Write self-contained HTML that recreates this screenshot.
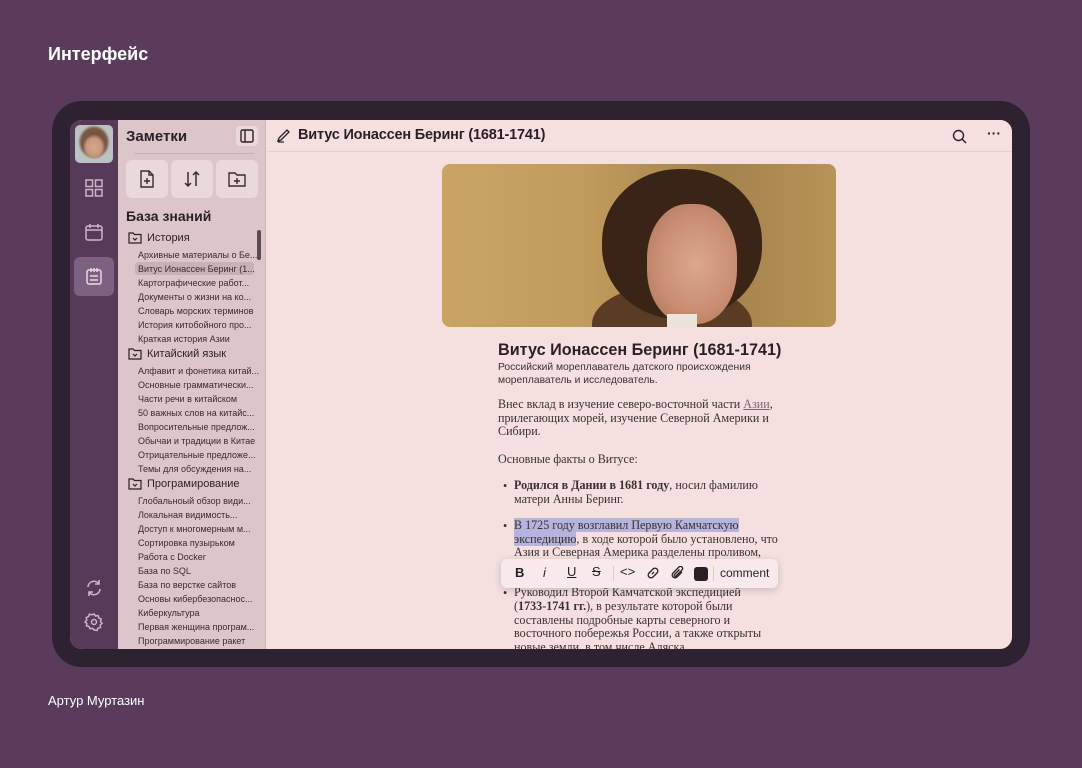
<!DOCTYPE html>
<html><head><meta charset="utf-8"><style>
*{margin:0;padding:0;box-sizing:border-box}
body{width:1082px;height:768px;background:#5a3b5c;font-family:"Liberation Sans",sans-serif;position:relative;overflow:hidden}
.abs{position:absolute}
.frame{left:52px;top:101px;width:978px;height:566px;background:#2d2230;border-radius:30px}
.screen{left:70px;top:120px;width:942px;height:529px;border-radius:12px;overflow:hidden;background:#f5e0df}
.rail{left:0;top:0;width:48px;height:529px;background:#573a58}
.notes{left:48px;top:0;width:148px;height:529px;background:#dcc6c9;border-right:1px solid #cdb3b7}
.item{position:absolute;left:20px;font-size:9px;color:#3a2a33;white-space:nowrap}
.folder{position:absolute;left:10px;font-size:11px;color:#2a1f26;display:flex;align-items:center;gap:5px}
.serif{font-family:"Liberation Serif",serif;font-size:12.1px;color:#3a2f33;position:absolute;left:428px;white-space:nowrap}
.btn{position:absolute;top:40px;width:42px;height:38px;background:#ead9da;border-radius:6px;display:flex;align-items:center;justify-content:center}
</style></head><body>
<div class="abs" style="left:48px;top:44px;color:#fff;font-size:18px;font-weight:bold">Интерфейс</div>
<div class="abs" style="left:48px;top:693px;color:#fff;font-size:13px">Артур Муртазин</div>
<div class="abs frame"></div>
<div class="abs screen">
 <div class="abs rail">
  <div class="abs" style="left:5px;top:5px;width:38px;height:38px;border-radius:5px;background:radial-gradient(ellipse 30% 34% at 50% 58%,#d9a88f 0,#c8957c 70%,transparent 100%),radial-gradient(ellipse 42% 45% at 50% 45%,#6a4a35 0,#7a5a45 80%,transparent 100%),#b9c3c4"></div>
  <svg class="abs" style="left:14px;top:58px" width="20" height="20" viewBox="0 0 20 20" fill="none" stroke="#cdb5c6" stroke-width="1.5"><rect x="2" y="2" width="6.5" height="6.5"/><rect x="11.5" y="2" width="6.5" height="6.5"/><rect x="2" y="11.5" width="6.5" height="6.5"/><rect x="11.5" y="11.5" width="6.5" height="6.5"/></svg>
  <svg class="abs" style="left:14px;top:102px" width="20" height="20" viewBox="0 0 20 20" fill="none" stroke="#cdb5c6" stroke-width="1.5"><rect x="2" y="4" width="16" height="14" rx="2"/><path d="M2 8h16M6 2v4M14 2v4"/></svg>
  <div class="abs" style="left:4px;top:137px;width:40px;height:39px;background:#7e6180;border-radius:6px"></div>
  <svg class="abs" style="left:14px;top:146px" width="20" height="20" viewBox="0 0 20 20" fill="none" stroke="#e8d8e4" stroke-width="1.5"><rect x="3" y="4" width="14" height="14" rx="2"/><path d="M7 2v4M13 2v4M10 2v4M6 10h8M6 14h8"/></svg>
  <svg class="abs" style="left:14px;top:458px" width="20" height="20" viewBox="0 0 20 20" fill="none" stroke="#cdb5c6" stroke-width="1.6"><path d="M4 9a6 6 0 0 1 11-3M16 11a6 6 0 0 1-11 3M15 2v4h-4M5 18v-4h4"/></svg>
  <svg class="abs" style="left:14px;top:492px" width="20" height="20" viewBox="0 0 20 20" fill="none" stroke="#cdb5c6" stroke-width="1.5"><circle cx="10" cy="10" r="2.5"/><path d="M10 2l1.5 2 2.5-.5.8 2.4 2.3 1-.6 2.6 1.5 1.8-1.8 1.8.3 2.5-2.5.6-1 2.3-2.5-.6L10 18l-1.5-1.8-2.5.6-1-2.3-2.5-.6.3-2.5L1 10l1.8-1.8-.6-2.6 2.3-1 .8-2.4 2.5.5z"/></svg>
 </div>
 <div class="abs notes">
  <div class="abs" style="left:8px;top:8px;font-size:15px;font-weight:bold;color:#2a1f26">Заметки</div>
  <div class="abs" style="left:118px;top:6px;width:22px;height:20px;background:#ead9da;border-radius:4px"></div>
  <svg class="abs" style="left:122px;top:9px" width="14" height="14" viewBox="0 0 14 14" fill="none" stroke="#2a1f26" stroke-width="1.4"><rect x="1" y="1" width="12" height="12" rx="1.5"/><path d="M5 1v12"/></svg>
  <div class="abs" style="left:16px;top:33px;width:120px;height:1px;background:#c6b0b4"></div>
  <div class="btn" style="left:8px"><svg width="20" height="20" viewBox="0 0 20 20" fill="none" stroke="#3a2a33" stroke-width="1.4"><path d="M4 2h8l4 4v12H4z"/><path d="M12 2v4h4M10 9v6M7 12h6"/></svg></div>
  <div class="btn" style="left:53px"><svg width="20" height="20" viewBox="0 0 20 20" fill="none" stroke="#3a2a33" stroke-width="1.5"><path d="M6 3v14M3 14l3 3 3-3M14 17V3M11 6l3-3 3 3"/></svg></div>
  <div class="btn" style="left:98px"><svg width="20" height="20" viewBox="0 0 20 20" fill="none" stroke="#3a2a33" stroke-width="1.4"><path d="M2 4h6l2 2h8v11H2z"/><path d="M10 9v6M7 12h6"/></svg></div>
  <div class="abs" style="left:8px;top:88px;font-size:14px;font-weight:bold;color:#2a1f26">База знаний</div>
  <div class="abs" style="left:139px;top:110px;width:4px;height:30px;background:#5a4a52;border-radius:2px"></div>
  <div class="folder" style="top:112px"><svg width="14" height="12" viewBox="0 0 14 12" fill="none" stroke="#2a1f26" stroke-width="1.2"><path d="M1 1h4l1.5 1.5H13V11H1z"/><path d="M5 6l2 2 2-2"/></svg>История</div>
  <div class="item" style="top:130px">Архивные материалы о Бе...</div>
  <div class="abs" style="left:17px;top:142px;width:119px;height:13px;background:#c9b2b6;border-radius:3px"></div>
  <div class="item" style="top:144px">Витус Ионассен Беринг (1...</div>
  <div class="item" style="top:158px">Картографические работ...</div>
  <div class="item" style="top:172px">Документы о жизни на ко...</div>
  <div class="item" style="top:186px">Словарь морских терминов</div>
  <div class="item" style="top:200px">История китобойного про...</div>
  <div class="item" style="top:214px">Краткая история Азии</div>
  <div class="folder" style="top:228px"><svg width="14" height="12" viewBox="0 0 14 12" fill="none" stroke="#2a1f26" stroke-width="1.2"><path d="M1 1h4l1.5 1.5H13V11H1z"/><path d="M5 6l2 2 2-2"/></svg>Китайский язык</div>
  <div class="item" style="top:246px">Алфавит и фонетика китай...</div>
  <div class="item" style="top:260px">Основные грамматически...</div>
  <div class="item" style="top:274px">Части речи в китайском</div>
  <div class="item" style="top:288px">50 важных слов на китайс...</div>
  <div class="item" style="top:302px">Вопросительные предлож...</div>
  <div class="item" style="top:316px">Обычаи и традиции в Китае</div>
  <div class="item" style="top:330px">Отрицательные предложе...</div>
  <div class="item" style="top:344px">Темы для обсуждения на...</div>
  <div class="folder" style="top:358px"><svg width="14" height="12" viewBox="0 0 14 12" fill="none" stroke="#2a1f26" stroke-width="1.2"><path d="M1 1h4l1.5 1.5H13V11H1z"/><path d="M5 6l2 2 2-2"/></svg>Програмирование</div>
  <div class="item" style="top:376px">Глобальноый обзор види...</div>
  <div class="item" style="top:390px">Локальная видимость...</div>
  <div class="item" style="top:404px">Доступ к многомерным м...</div>
  <div class="item" style="top:418px">Сортировка пузырьком</div>
  <div class="item" style="top:432px">Работа с Docker</div>
  <div class="item" style="top:446px">База по SQL</div>
  <div class="item" style="top:460px">База по верстке сайтов</div>
  <div class="item" style="top:474px">Основы кибербезопаснос...</div>
  <div class="item" style="top:488px">Киберкультура</div>
  <div class="item" style="top:502px">Первая женщина програм...</div>
  <div class="item" style="top:516px">Программирование ракет</div>
 </div>
 <div class="abs" style="left:197px;top:0;width:745px;height:32px;border-bottom:1px solid #e6cfcf;background:#f5e0df"></div>
 <svg class="abs" style="left:206px;top:8px" width="15" height="15" viewBox="0 0 15 15" fill="none" stroke="#2a1f26" stroke-width="1.3"><path d="M2 13l1-3 8-8 2 2-8 8zM2 14h6"/></svg>
 <div class="abs" style="left:228px;top:7px;font-size:14.5px;font-weight:bold;color:#2a1f26;letter-spacing:-0.2px">Витус Ионассен Беринг (1681-1741)</div>
 <svg class="abs" style="left:882px;top:9px" width="15" height="15" viewBox="0 0 15 15" fill="none" stroke="#2a1f26" stroke-width="1.4"><circle cx="6.5" cy="6.5" r="5"/><path d="M10 10l4 4"/></svg>
 <div class="abs" style="left:917px;top:5px;font-size:14px;font-weight:bold;color:#2a1f26">···</div>
 <div class="abs" style="left:372px;top:44px;width:394px;height:163px;border-radius:8px;overflow:hidden;background:linear-gradient(90deg,#c9a463,#c29c5c 35%,#a3824c 70%,#b89357)">
  <div class="abs" style="left:150px;top:120px;width:160px;height:80px;border-radius:50%;background:#5a3c24"></div>
  <div class="abs" style="left:160px;top:5px;width:160px;height:150px;border-radius:48%;background:#3a2416"></div>
  <div class="abs" style="left:205px;top:40px;width:90px;height:120px;border-radius:45%;background:radial-gradient(ellipse at 55% 50%,#dca88a 0,#c98f72 55%,#a87058 100%)"></div>
  <div class="abs" style="left:225px;top:150px;width:30px;height:20px;background:#ece4da"></div>
 </div>
 <div class="abs" style="left:428px;top:221px;font-size:16.2px;font-weight:bold;color:#2a1f26">Витус Ионассен Беринг (1681-1741)</div>
 <div class="abs" style="left:428px;top:242px;font-size:10.3px;color:#3a2f33;line-height:12.5px">Российский мореплаватель датского происхождения<br>мореплаватель и исследователь.</div>
 <div class="serif" style="top:278px;line-height:13.5px">Внес вклад в изучение северо-восточной части <u style="color:#7a6a70">Азии</u>,<br>прилегающих морей, изучение Северной Америки и<br>Сибири.</div>
 <div class="serif" style="top:332px">Основные факты о Витусе:</div>
 <div class="serif" style="left:433px;top:359px">•</div>
 <div class="serif" style="left:444px;top:359px;line-height:13.5px"><b>Родился в Дании в 1681 году</b>, носил фамилию<br>матери Анны Беринг.</div>
 <div class="serif" style="left:433px;top:399px">•</div>
 <div class="serif" style="left:444px;top:399px;line-height:13.5px"><span style="background:#b4b4dc">В 1725 году возглавил Первую Камчатскую</span><br><span style="background:#b4b4dc">экспедицию</span>, в ходе которой было установлено, что<br>Азия и Северная Америка разделены проливом,</div>
 <div class="serif" style="left:433px;top:466px">•</div>
 <div class="serif" style="left:444px;top:466px;line-height:13.8px">Руководил Второй Камчатской экспедицией<br>(<b>1733-1741 гг.</b>), в результате которой были<br>составлены подробные карты северного и<br>восточного побережья России, а также открыты<br>новые земли, в том числе Аляска.</div>
 <div class="abs" style="left:431px;top:439px;width:277px;height:29px;background:#f8eaea;border-radius:6px;box-shadow:0 2px 8px rgba(0,0,0,.18);font-size:13px;color:#2a1f26">
  <span class="abs" style="left:14px;top:6px;font-weight:bold">B</span>
  <span class="abs" style="left:42px;top:6px;font-style:italic">i</span>
  <span class="abs" style="left:66px;top:5px;text-decoration:underline">U</span>
  <span class="abs" style="left:91px;top:5px;text-decoration:line-through">S</span>
  <span class="abs" style="left:112px;top:7px;width:1px;height:15px;background:#ddc9c9"></span>
  <span class="abs" style="left:119px;top:5px">&lt;&gt;</span>
  <svg class="abs" style="left:145px;top:7px" width="14" height="14" viewBox="0 0 14 14" fill="none" stroke="#2a1f26" stroke-width="1.3"><path d="M6 8l2-2M5 5l2-2a2.5 2.5 0 0 1 4 4l-2 2M9 9l-2 2a2.5 2.5 0 0 1-4-4l2-2"/></svg>
  <svg class="abs" style="left:170px;top:7px" width="14" height="14" viewBox="0 0 14 14" fill="none" stroke="#2a1f26" stroke-width="1.3"><path d="M11 6l-5 5a2.5 2.5 0 0 1-4-4l6-6a1.8 1.8 0 0 1 3 3l-6 6a.8.8 0 0 1-1.5-1.5l5-5"/></svg>
  <span class="abs" style="left:193px;top:8px;width:14px;height:14px;background:#2a1f26;border-radius:3px"></span>
  <span class="abs" style="left:212px;top:7px;width:1px;height:15px;background:#ddc9c9"></span>
  <span class="abs" style="left:219px;top:7px;font-size:12px">comment</span>
 </div>
</div>
</body></html>
